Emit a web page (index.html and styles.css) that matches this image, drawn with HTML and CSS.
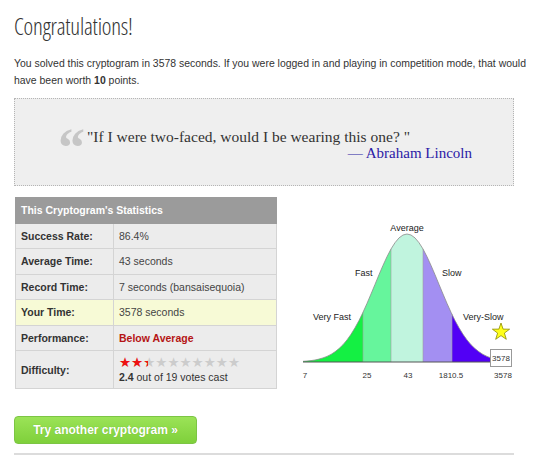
FILE: index.html
```html
<!DOCTYPE html>
<html lang="en">
<head>
  <meta charset="UTF-8" />
  <title>Congratulations! - Cryptogram</title>
  <link rel="stylesheet" href="styles.css">
</head>
<body>
  <div class="page">
    <h1>Congratulations!</h1>
    <p class="intro">You solved this cryptogram in 3578 seconds. If you were logged in and playing in competition mode, that would have been worth <b>10</b> points.</p>

    <div class="quote-box">
      <span class="quote-mark">&ldquo;</span>
      <div class="quote-body">
        <div class="quote-text">"If I were two-faced, would I be wearing this one? "</div>
        <div class="quote-author">&mdash; Abraham Lincoln</div>
      </div>
    </div>

    <div class="stats-row">
      <table class="stats">
        <tr class="head"><td colspan="2">This Cryptogram's Statistics</td></tr>
        <tr><th>Success Rate:</th><td>86.4%</td></tr>
        <tr><th>Average Time:</th><td>43 seconds</td></tr>
        <tr><th>Record Time:</th><td>7 seconds (bansaisequoia)</td></tr>
        <tr class="mine"><th>Your Time:</th><td>3578 seconds</td></tr>
        <tr><th>Performance:</th><td class="perf">Below Average</td></tr>
        <tr class="diff">
          <th>Difficulty:</th>
          <td>
            <div class="stars">
              <span class="stars-off">★★★★★★★★★★</span>
              <span class="stars-on" style="width: 24%">★★★★★★★★★★</span>
            </div>
            <div class="votes"><b>2.4</b> out of 19 votes cast</div>
          </td>
        </tr>
      </table>

      <svg class="chart" width="240" height="178" viewBox="290 210 240 178">
        <defs>
          <clipPath id="bell">
            <polygon points="303,362 303,361.3 307,361 311,360.6 315,360 319,359.1 323,357.9 327,356.4 331,354.4 335,351.8 339,348.6 343,344.7 347,339.9 351,334.3 355,327.8 359,320.5 363,312.3 367,303.4 371,294 375,284.4 379,274.7 383,265.4 387,256.7 391,249 395,242.7 399,237.9 403,235 407,234 411,235 415,237.9 419,242.7 423,249 427,256.7 431,265.4 435,274.7 439,284.4 443,294 447,303.4 451,312.3 455,320.5 459,327.8 463,334.3 467,339.9 471,344.7 475,348.6 479,351.8 483,354.4 487,356.4 491,357.9 495,359.1 499,360 503,360.6 503,362"/>
          </clipPath>
        </defs>
        <g clip-path="url(#bell)">
          <rect x="300" y="230" width="63" height="135" fill="#14f043"/>
          <rect x="363" y="230" width="28" height="135" fill="#66f59c"/>
          <rect x="391" y="230" width="32" height="135" fill="#c0f4de"/>
          <rect x="423" y="230" width="29" height="135" fill="#a38ff2"/>
          <rect x="452" y="230" width="55" height="135" fill="#5200f5"/>
        </g>
        <polyline fill="none" stroke="#8a8a8a" stroke-width="0.8" points="303,361.3 307,361 311,360.6 315,360 319,359.1 323,357.9 327,356.4 331,354.4 335,351.8 339,348.6 343,344.7 347,339.9 351,334.3 355,327.8 359,320.5 363,312.3 367,303.4 371,294 375,284.4 379,274.7 383,265.4 387,256.7 391,249 395,242.7 399,237.9 403,235 407,234 411,235 415,237.9 419,242.7 423,249 427,256.7 431,265.4 435,274.7 439,284.4 443,294 447,303.4 451,312.3 455,320.5 459,327.8 463,334.3 467,339.9 471,344.7 475,348.6 479,351.8 483,354.4 487,356.4 491,357.9 495,359.1"/>
        <g stroke="#a0a0a0" stroke-width="0.6">
          <line x1="363" y1="312.3" x2="363" y2="362"/>
          <line x1="391" y1="249" x2="391" y2="362"/>
          <line x1="423" y1="249" x2="423" y2="362"/>
          <line x1="452" y1="314" x2="452" y2="362"/>
        </g>
        <line x1="303" y1="362" x2="492" y2="362" stroke="#555" stroke-width="1"/>

        <g class="chart-label">
          <text x="407" y="231" text-anchor="middle">Average</text>
          <text x="355" y="276">Fast</text>
          <text x="442" y="276">Slow</text>
          <text x="313" y="320">Very Fast</text>
          <text x="463" y="320">Very-Slow</text>
        </g>

        <polygon points="501,323 503.1,329.1 509.6,329.2 504.4,333.1 506.3,339.3 501,335.6 495.7,339.3 497.6,333.1 492.4,329.2 498.9,329.1" fill="#ffff1a" stroke="#8c8c00" stroke-width="0.8"/>

        <rect x="490.5" y="349.5" width="21" height="17" fill="#fff" stroke="#999"/>
        <text class="chart-axis" x="501" y="361" text-anchor="middle">3578</text>

        <g class="chart-axis" text-anchor="middle">
          <text x="305" y="378">7</text>
          <text x="367" y="378">25</text>
          <text x="408" y="378">43</text>
          <text x="451" y="378">1810.5</text>
          <text x="503" y="378">3578</text>
        </g>
      </svg>
    </div>

    <a class="btn-next" href="#">Try another cryptogram &raquo;</a>
    <hr class="rule">
  </div>
</body>
</html>
```

FILE: styles.css
```css
* {margin: 0; padding: 0; box-sizing: border-box;}
body {
  font-family: 'Liberation Sans', Arial, sans-serif;
  background: #fff;
  color: #333;
}

.page {
  width: 500px;
  margin-left: 14px;
}

h1 {
  font-family: 'Open Sans', sans-serif;
  font-weight: 300;
  font-stretch: 75%;
  font-size: 23px;
  letter-spacing: -0.2px;
  line-height: 30px;
  margin-top: 11px;
  color: #333;
}

.intro {
  width: 522px;
  margin-top: 14px;
  font-size: 10.45px;
  line-height: 17px;
}

.quote-box {
  margin-top: 9px;
  background: #efefef;
  border: 1px dotted #b5b5b5;
  padding: 30px 41px 24px 43px;
  display: flex;
  gap: 9px;
}
.quote-mark {
  font-family: 'Liberation Serif', serif;
  font-weight: bold;
  font-size: 54px;
  line-height: 40px;
  height: 20px;
  width: 20px;
  color: #c6c6c6;
  margin-top: -1px;
}
.quote-body {
  flex: 1;
  font-family: 'Liberation Serif', serif;
}
.quote-text {
  font-size: 15.5px;
  line-height: 16px;
  color: #333;
}
.quote-author {
  font-size: 15px;
  line-height: 16px;
  text-align: right;
  color: #2b1aa6;
}

.stats-row {
  display: flex;
  align-items: flex-start;
  margin-top: 11px;
}

.stats {
  flex: none;
  width: 262px;
  margin-left: 1px;
  border-collapse: collapse;
  background: #ececec;
  font-size: 10.5px;
}
.stats th, .stats td {
  height: 25.5px;
  padding: 0 5px;
  border: 1px solid #d4d4d4;
  text-align: left;
  vertical-align: middle;
}
.stats th {
  width: 98px;
  font-weight: bold;
  color: #333;
}
.stats td {
  color: #444;
}
.stats .head td {
  background: #9b9b9b;
  color: #fff;
  font-weight: bold;
  border-color: #9b9b9b;
}
.stats .mine th, .stats .mine td {
  background: #f7fad6;
}
.stats .perf {
  color: #b51414;
  font-weight: bold;
}
.stats .diff th, .stats .diff td {
  height: 38px;
}

.stars {
  position: relative;
  display: inline-block;
  font-family: 'DejaVu Sans', sans-serif;
  font-size: 13.5px;
  line-height: 15px;
  white-space: nowrap;
}
.stars-off {
  color: #cccccc;
}
.stars-on {
  position: absolute;
  left: 0;
  top: 0;
  overflow: hidden;
  color: #ee1111;
}
.votes {
  line-height: 14px;
  color: #333;
}

.chart {
  flex: none;
  display: block;
  margin-top: 13px;
  margin-left: 13px;
}
.chart-label {
  font-family: 'Liberation Sans', sans-serif;
  font-size: 9px;
  fill: #222;
}
.chart-axis {
  font-family: 'Liberation Sans', sans-serif;
  font-size: 8px;
  fill: #333;
}

.btn-next {
  display: block;
  width: 183px;
  height: 28px;
  margin-top: 27px;
  border: 1px solid #7cc544;
  border-radius: 4px;
  background: linear-gradient(to bottom, #9be357, #7fd03b);
  color: #fff;
  font-weight: bold;
  font-size: 12px;
  line-height: 26px;
  text-align: center;
  text-decoration: none;
  text-shadow: 0 0 1px rgba(60,120,20,0.4);
}

.rule {
  margin-top: 9px;
  border: none;
  border-top: 2px solid #dcdcdc;
}
```
